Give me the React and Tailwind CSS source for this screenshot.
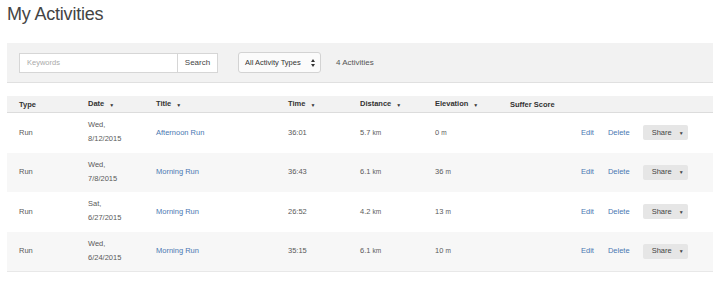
import React from "react";

const activities = [
  { type: "Run", day: "Wed,", date: "8/12/2015", title: "Afternoon Run", time: "36:01", dist: "5.7", elev: "0" },
  { type: "Run", day: "Wed,", date: "7/8/2015", title: "Morning Run", time: "36:43", dist: "6.1", elev: "36" },
  { type: "Run", day: "Sat,", date: "6/27/2015", title: "Morning Run", time: "26:52", dist: "4.2", elev: "13" },
  { type: "Run", day: "Wed,", date: "6/24/2015", title: "Morning Run", time: "35:15", dist: "6.1", elev: "10" },
];

const cols = "grid grid-cols-[69px_68px_132px_72px_75px_75px_71px_1fr]";

const Caret = () => <span className="ml-[5px] text-[5px] align-middle">▼</span>;

const App = () => {
  return (
    <div
      className="w-[720px] h-[286px] bg-white px-[7px] text-[#5a5a5a] overflow-hidden"
      style={{ fontFamily: '"Liberation Sans", Arial, sans-serif' }}
    >
      {/* encabezado */}
      <h1 className="text-[18px] leading-[22px] pt-[3px] text-[#444] mb-[18px] tracking-[-0.2px]">
        My Activities
      </h1>

      {/* filtros */}
      <div className="bg-[#f2f2f2] border-b border-[#e0e0e0] h-[40px] flex items-start pt-[10px] pl-3">
        <div className="flex">
          <div className="w-[159px] h-[20px] bg-white border border-[#d6d6d6] flex items-center pl-[7px] text-[7.5px] leading-[10px] text-[#aaa]">
            Keywords
          </div>
          <div className="w-[40px] h-[20px] bg-white border border-l-0 border-[#d6d6d6] flex items-center justify-center text-[8px] leading-[10px] text-[#444]">
            Search
          </div>
        </div>
        <div className="ml-[20px] -mt-[1px] w-[83px] h-[21px] rounded-[3px] border border-[#d3d3d3] bg-[#fbfbfb] flex items-center pl-[6px] pr-[5px] text-[7.5px] leading-[10px] text-[#333]">
          <span className="flex-1">All Activity Types</span>
          <svg width="4" height="8" viewBox="0 0 4 8" className="fill-[#333]">
            <path d="M2 0 L4 3 L0 3 Z M0 5 L4 5 L2 8 Z" />
          </svg>
        </div>
        <div className="ml-[15px] h-[20px] flex items-center text-[8px] leading-[10px] text-[#555]">4 Activities</div>
      </div>

      {/* tabla */}
      <div className="mt-[13px] text-[7.5px] leading-[10px]">
        <div className={`${cols} bg-[#f2f2f2] border-b border-[#dcdcdc] h-[17px] pt-[1px] items-center font-bold text-[#333]`}>
          <div className="pl-3">Type</div>
          <div className="pl-3">Date<Caret /></div>
          <div className="pl-3">Title<Caret /></div>
          <div className="pl-3">Time<Caret /></div>
          <div className="pl-3">Distance<Caret /></div>
          <div className="pl-3">Elevation<Caret /></div>
          <div className="pl-3">Suffer Score</div>
          <div />
        </div>

        {activities.map((a, i) => (
          <div
            key={i}
            className={`${cols} h-[39.5px] items-center ${i % 2 === 1 ? "bg-[#f7f7f7]" : "bg-white"}`}
          >
            <div className="pl-3">{a.type}</div>
            <div className="pl-3 pb-[1px]">
              <div className="leading-[14px]">{a.day}</div>
              <div className="leading-[14px]">{a.date}</div>
            </div>
            <div className="pl-3 text-[#4a78b2]">{a.title}</div>
            <div className="pl-3">{a.time}</div>
            <div className="pl-3">
              {a.dist} <span className="text-[6.5px]">km</span>
            </div>
            <div className="pl-3">
              {a.elev} <span className="text-[6.5px]">m</span>
            </div>
            <div className="pl-3" />
            <div className="pl-3 flex items-center text-[#4a78b2]">
              <span>Edit</span>
              <span className="ml-[14px]">Delete</span>
              <div className="ml-[13px] w-[45px] h-[15px] bg-[#e6e6e6] rounded-[2px] flex items-center pl-[9px] text-[#444]">
                Share
                <span className="ml-[7px] text-[5px]">▼</span>
              </div>
            </div>
          </div>
        ))}
        <div className="border-t border-[#e8e8e8]" />
      </div>
    </div>
  );
};

export default App;
